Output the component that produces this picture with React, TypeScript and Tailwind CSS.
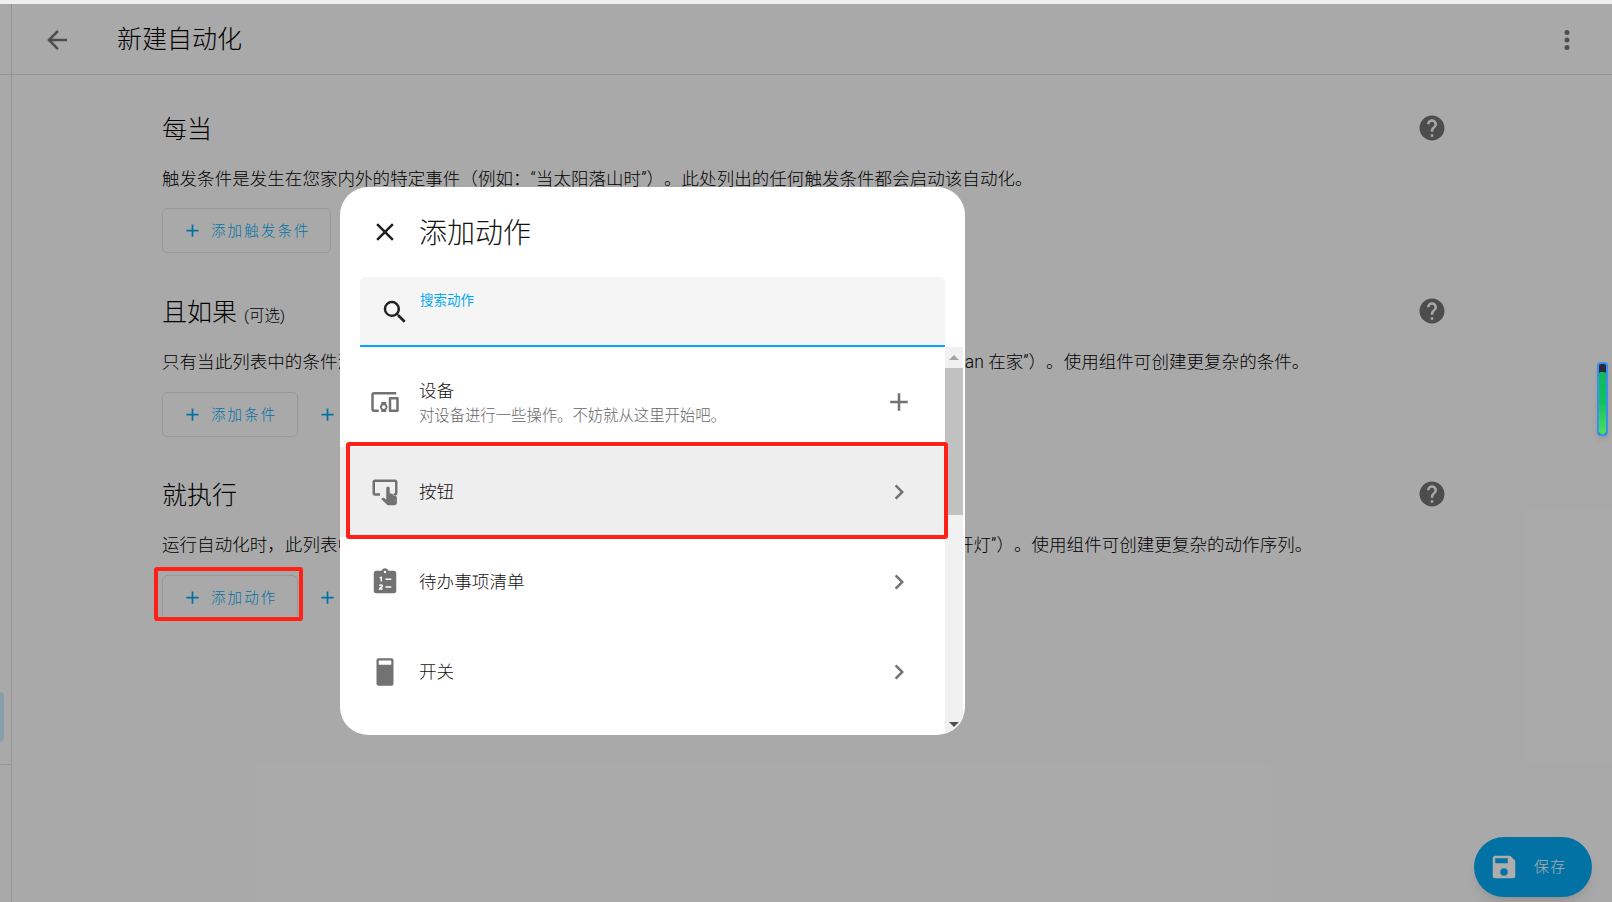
import type { ReactNode } from 'react';

const mdi = {
  arrowLeft: 'M20,11V13H8L13.5,18.5L12.08,19.92L4.16,12L12.08,4.08L13.5,5.5L8,11H20Z',
  dots: 'M12,16A2,2 0 0,1 14,18A2,2 0 0,1 12,20A2,2 0 0,1 10,18A2,2 0 0,1 12,16M12,10A2,2 0 0,1 14,12A2,2 0 0,1 12,14A2,2 0 0,1 10,12A2,2 0 0,1 12,10M12,4A2,2 0 0,1 14,6A2,2 0 0,1 12,8A2,2 0 0,1 10,6A2,2 0 0,1 12,4Z',
  help: 'M15.07,11.25L14.17,12.17C13.45,12.89 13,13.5 13,15H11V14.5C11,13.39 11.45,12.39 12.17,11.67L13.41,10.41C13.78,10.05 14,9.55 14,9C14,7.89 13.1,7 12,7A2,2 0 0,0 10,9H8A4,4 0 0,1 12,5A4,4 0 0,1 16,9C16,9.88 15.64,10.67 15.07,11.25M13,19H11V17H13M12,2A10,10 0 0,0 2,12A10,10 0 0,0 12,22A10,10 0 0,0 22,12C22,6.47 17.5,2 12,2Z',
  close: 'M19,6.41L17.59,5L12,10.59L6.41,5L5,6.41L10.59,12L5,17.59L6.41,19L12,13.41L17.59,19L19,17.59L13.41,12L19,6.41Z',
  magnify: 'M9.5,3A6.5,6.5 0 0,1 16,9.5C16,11.11 15.41,12.59 14.44,13.73L14.71,14H15.5L20.5,19L19,20.5L14,15.5V14.71L13.73,14.44C12.59,15.41 11.11,16 9.5,16A6.5,6.5 0 0,1 3,9.5A6.5,6.5 0 0,1 9.5,3M9.5,5C7,5 5,7 5,9.5C5,12 7,14 9.5,14C12,14 14,12 14,9.5C14,7 12,5 9.5,5Z',
  plus: 'M19,13H13V19H11V13H5V11H11V5H13V11H19V13Z',
  chevron: 'M8.59,16.58L13.17,12L8.59,7.41L10,6L16,12L10,18L8.59,16.58Z',
  save: 'M15,9H5V5H15M12,19A3,3 0 0,1 9,16A3,3 0 0,1 12,13A3,3 0 0,1 15,16A3,3 0 0,1 12,19M17,3H5C3.89,3 3,3.9 3,5V19A2,2 0 0,0 5,21H19A2,2 0 0,0 21,19V7L17,3Z',
  devices: 'M3 6H21V4H3C1.9 4 1 4.9 1 6V18C1 19.1 1.9 20 3 20H7V18H3V6M13 12H9V13.78C8.39 14.33 8 15.11 8 16C8 16.89 8.39 17.67 9 18.22V20H13V18.22C13.61 17.67 14 16.88 14 16S13.61 14.33 13 13.78V12M11 17.5C10.17 17.5 9.5 16.83 9.5 16S10.17 14.5 11 14.5 12.5 15.17 12.5 16 11.83 17.5 11 17.5M22 8H16C15.5 8 15 8.5 15 9V19C15 19.5 15.5 20 16 20H22C22.5 20 23 19.5 23 19V9C23 8.5 22.5 8 22 8M21 18H17V10H21V18Z',
  tap: 'M20 2H4C2.9 2 2 2.9 2 4V13C2 14.1 2.9 15 4 15H8V13H4V4H20V13H19V15H20C21.1 15 22 14.1 22 13V4C22 2.9 21.1 2 20 2ZM21.5 20.5C21.5 21.6 20.6 22.5 19.5 22.5H14.5C14.1 22.5 13.7 22.3 13.4 22L9 17.6L9.8 16.8C10 16.6 10.3 16.5 10.6 16.5H11L13 18V9C13 8.2 13.6 7.6 14.4 7.6S15.8 8.2 15.8 9V13L17 13.2L20.4 15C21.1 15.3 21.5 15.9 21.5 16.6V20.5Z',
  clipboard: 'M19,3H14.82C14.4,1.84 13.3,1 12,1C10.7,1 9.6,1.84 9.18,3H5A2,2 0 0,0 3,5V19A2,2 0 0,0 5,21H19A2,2 0 0,0 21,19V5A2,2 0 0,0 19,3M12,3A1,1 0 0,1 13,4A1,1 0 0,1 12,5A1,1 0 0,1 11,4A1,1 0 0,1 12,3Z',
};

function Icon({ d, className = '' }: { d: string; className?: string }) {
  return (
    <svg viewBox="0 0 24 24" fill="currentColor" className={className}>
      <path d={d} />
    </svg>
  );
}

function ClipboardNumbered() {
  return (
    <svg viewBox="0 0 24 24" className="h-[30px] w-[30px] text-[#727272]">
      <path d={mdi.clipboard} fill="currentColor" fillRule="evenodd" />
      <path d="M7.8 8.8L9 8.3V11.6M12.4 9.8H17M7.6 15C7.8 14 9.9 14 9.9 15.1C9.9 16 7.7 16.6 7.6 17.6H10.1M12.4 16H17" fill="none" stroke="#fff" strokeWidth="1.1" />
    </svg>
  );
}

function SwitchIcon() {
  return (
    <svg viewBox="0 0 24 24" className="h-[30px] w-[30px] text-[#727272]">
      <rect x="5.2" y="1" width="13.6" height="22" rx="1.6" fill="currentColor" />
      <rect x="7" y="2.8" width="10" height="3.4" rx="0.4" fill="#fff" />
    </svg>
  );
}

function AddButton({ label }: { label?: string }) {
  // the second button in a row has no outline and its label sits behind the dialog
  return (
    <button
      className={`flex h-[45px] items-center gap-[8px] rounded-[5px] pl-[19px] pr-[19.5px] text-[14.5px] tracking-[2.1px] text-[#03a9f4] ${
        label ? 'border border-[#e0e0e0]' : ''
      }`}
    >
      <Icon d={mdi.plus} className="h-[21px] w-[21px]" />
      {label && <span className="pt-[2px]">{label}</span>}
    </button>
  );
}

function Section({ title, hint, text, buttonsTop, children }: { title: string; hint?: string; text: string; buttonsTop: string; children: ReactNode }) {
  return (
    <section className="h-[183px]">
      <div className="flex h-[36px] items-center justify-between">
        <h2 className="pt-[3px] text-[25px] text-black">
          {title}
          {hint && <span className="ml-[7px] text-[15.5px]">{hint}</span>}
        </h2>
        <Icon d={mdi.help} className="h-[30px] w-[30px] text-[#727272]" />
      </div>
      <p className="mt-[20px] h-[26px] whitespace-nowrap text-[17.5px] leading-[26px] tracking-[0.05px] text-black">{text}</p>
      <div className={`flex ${buttonsTop}`}>{children}</div>
    </section>
  );
}

function ActionRow({ icon, label, sub, trailing, active }: { icon: ReactNode; label: string; sub?: string; trailing: string; active?: boolean }) {
  return (
    <div className={`flex h-[90px] shrink-0 items-center pl-[30px] pr-[31px] ${active ? 'bg-[#eeeeee]' : ''}`}>
      <div className="flex w-[49px] shrink-0 items-center">{icon}</div>
      <div className="flex-1">
        <div className="text-[17.6px] leading-[26px] text-[#111111]">{label}</div>
        {sub && <div className="mt-[2px] text-[15.35px] leading-[20px] text-[#666666]">{sub}</div>}
      </div>
      <Icon d={trailing} className="h-[30px] w-[30px] text-[#727272]" />
    </div>
  );
}

export default function App() {
  return (
    <div
      className="flex h-[902px] w-[1612px] flex-col overflow-hidden bg-[#fafafa] font-light [text-spacing-trim:space-all]"
      style={{ fontFamily: 'Roboto, "Noto Sans CJK SC", sans-serif' }}
    >
      <div className="h-[4px] shrink-0 bg-[#f0f0f0]" />
      <div className="relative flex flex-1">
        {/* sidebar rail */}
        <aside className="flex w-[12px] shrink-0 flex-col border-r border-[#dcdcdc]">
          <div className="h-[71px] border-b border-[#dcdcdc]" />
          <div className="h-[690px] border-b border-[#dcdcdc] pt-[617px]">
            <div className="h-[50px] w-[4px] rounded-r-[4px] bg-[#03a9f4]/20" />
          </div>
        </aside>

        <main className="flex-1">
          <header className="flex h-[71px] items-center border-b border-[#dcdcdc] pl-[30px] pr-[30px] pt-[2px]">
            <Icon d={mdi.arrowLeft} className="h-[30px] w-[30px] text-[#727272]" />
            <h1 className="ml-[45px] flex-1 text-[25px] text-black">新建自动化</h1>
            <Icon d={mdi.dots} className="h-[30px] w-[30px] text-[#727272]" />
          </header>

          <div className="w-[1435px] pl-[150px] pt-[35px]">
            <Section title="每当" buttonsTop="mt-[16px]" text="触发条件是发生在您家内外的特定事件（例如：“当太阳落山时”）。此处列出的任何触发条件都会启动该自动化。">
              <AddButton label="添加触发条件" />
            </Section>
            <Section title="且如果" hint="(可选)" buttonsTop="mt-[17px]" text="只有当此列表中的条件满足时，自动化才会执行。条件全部满足才执行，比如说（例如：“如果 Allen 和 Jan 在家”）。使用组件可创建更复杂的条件。">
              <AddButton label="添加条件" />
              <AddButton />
            </Section>
            <Section title="就执行" buttonsTop="mt-[17px]" text="运行自动化时，此列表中的所有动作都将会按照设定顺序依次逐个地来执行（例如：“Alan回到家后请打开灯”）。使用组件可创建更复杂的动作序列。">
              <div className="relative">
                <AddButton label="添加动作" />
                <div className="absolute left-[-8px] top-[-8px] z-20 h-[54px] w-[149px] rounded-[3px] border-[4px] border-[#ff2117]" />
              </div>
              <AddButton />
            </Section>
          </div>
        </main>

        {/* save fab */}
        <button className="absolute bottom-[5px] right-[20px] flex h-[60px] w-[118px] items-center rounded-[30px] bg-[#03a9f4] pl-[15px] text-[15px] tracking-[1.3px] text-white shadow-lg">
          <Icon d={mdi.save} className="h-[30px] w-[30px]" />
          <span className="ml-[15px] pt-[1px]">保存</span>
        </button>

        {/* dialog scrim */}
        <div className="absolute inset-0 z-10 bg-black/32" />

        <div className="absolute left-[340px] top-[183px] z-20 flex h-[548px] w-[625px] flex-col overflow-hidden rounded-[28px] bg-white">
          <div className="flex h-[90px] shrink-0 items-center pl-[30px]">
            <Icon d={mdi.close} className="h-[30px] w-[30px] text-[#212121]" />
            <h2 className="ml-[19px] pt-[3px] text-[28px] text-[#111111]">添加动作</h2>
          </div>
          <div className="relative ml-[20px] mr-[20px] h-[70px] shrink-0 rounded-t-[5px] border-b-2 border-[#03a9f4] bg-[#f5f5f5]">
            <Icon d={mdi.magnify} className="absolute left-[20px] top-[20px] h-[30px] w-[30px] text-[#212121]" />
            <span className="absolute left-[60px] top-[14px] text-[13.5px] font-normal leading-[18px] text-[#03a9f4]">搜索动作</span>
          </div>
          <div className="flex min-h-0 flex-1">
            <div className="min-w-0 flex-1 overflow-hidden pt-[10px]">
              <ActionRow icon={<Icon d={mdi.devices} className="h-[30px] w-[30px] text-[#727272]" />} label="设备" sub="对设备进行一些操作。不妨就从这里开始吧。" trailing={mdi.plus} />
              <ActionRow icon={<Icon d={mdi.tap} className="h-[30px] w-[30px] text-[#727272]" />} label="按钮" trailing={mdi.chevron} active />
              <ActionRow icon={<ClipboardNumbered />} label="待办事项清单" trailing={mdi.chevron} />
              <ActionRow icon={<SwitchIcon />} label="开关" trailing={mdi.chevron} />
            </div>
            <div className="mr-[2px] flex w-[18px] shrink-0 flex-col bg-[#f1f1f1]">
              <div className="flex h-[21px] items-center justify-center">
                <div className="h-0 w-0 border-x-[5px] border-b-[5px] border-x-transparent border-b-[#a3a3a3]" />
              </div>
              <div className="h-[147px] bg-[#c1c1c1]" />
              <div className="flex-1" />
              <div className="flex h-[21px] items-center justify-center">
                <div className="h-0 w-0 border-x-[5px] border-t-[5px] border-x-transparent border-t-[#505050]" />
              </div>
            </div>
          </div>
          <div className="absolute left-[6px] top-[255px] h-[97px] w-[602px] rounded-[3px] border-[4px] border-[#ff2117]" />
        </div>

        {/* floating level widget */}
        <div className="absolute right-[4px] top-[358px] z-30 h-[74px] w-[11px] overflow-hidden rounded-[4px] border-2 border-[#3b8ff0] bg-[#2a2a3a] pt-[8px] shadow-md">
          <div className="h-full rounded-[2px] bg-gradient-to-b from-[#10b860] via-[#14c060] to-[#4ade60]" />
        </div>
      </div>
    </div>
  );
}
